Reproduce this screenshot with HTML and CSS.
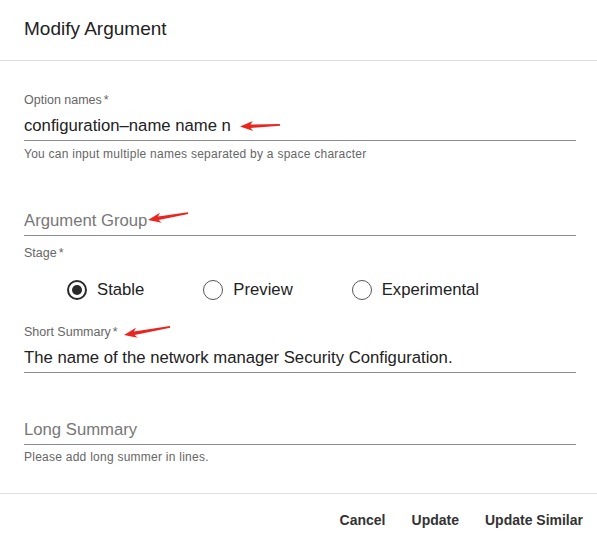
FILE: index.html
```html
<!DOCTYPE html>
<html lang="en">
<head>
<meta charset="utf-8">
<title>Modify Argument</title>
<link rel="stylesheet" href="styles.css">
</head>
<body>
<div class="dialog">
  <header class="dialog-header">
    <h1 class="dialog-title">Modify Argument</h1>
  </header>
  <main class="dialog-body">
    <div class="field">
      <div class="field-label">Option names<span class="req">*</span></div>
      <div class="field-input">configuration–name name n</div>
      <div class="field-help">You can input multiple names separated by a space character</div>
    </div>
    <div class="field field-group">
      <div class="field-input placeholder">Argument Group</div>
    </div>
    <div class="field field-stage">
      <div class="field-label">Stage<span class="req">*</span></div>
      <div class="radio-row">
        <label class="radio"><span class="radio-dot checked"></span><span class="radio-text">Stable</span></label>
        <label class="radio"><span class="radio-dot"></span><span class="radio-text">Preview</span></label>
        <label class="radio"><span class="radio-dot"></span><span class="radio-text">Experimental</span></label>
      </div>
    </div>
    <div class="field field-short">
      <div class="field-label">Short Summary<span class="req">*</span></div>
      <div class="field-input">The name of the network manager Security Configuration.</div>
    </div>
    <div class="field field-long">
      <div class="field-input placeholder">Long Summary</div>
      <div class="field-help help-long">Please add long summer in lines.</div>
    </div>
  </main>
  <footer class="dialog-footer">
    <button class="btn">Cancel</button>
    <button class="btn">Update</button>
    <button class="btn">Update Similar</button>
  </footer>
  <svg class="annotations" width="597" height="546" viewBox="0 0 597 546">
    <g fill="#e8261f">
      <polygon transform="translate(240,126.5) rotate(-2.2)" points="0,0 13,-5 10.5,-1.6 40,-0.9 40,0.9 10.5,1.8 13,5"/>
      <polygon transform="translate(148,220) rotate(-9.9)" points="0,0 13,-5 10.5,-1.6 40.6,-0.9 40.6,0.9 10.5,1.8 13,5"/>
      <polygon transform="translate(124,335) rotate(-9.9)" points="0,0 13,-5 10.5,-1.6 46.7,-0.9 46.7,0.9 10.5,1.8 13,5"/>
    </g>
  </svg>
</div>
</body>
</html>
```
FILE: styles.css
```css
* { box-sizing: border-box; }
html, body { margin: 0; padding: 0; background: #fff; }
body { font-family: "Liberation Sans", Arial, sans-serif; color: #222; }

.dialog {
  position: relative;
  width: 597px;
  height: 546px;
  display: flex;
  flex-direction: column;
  background: #fff;
}

.dialog-header {
  height: 61px;
  padding: 0 24px;
  display: flex;
  align-items: center;
  border-bottom: 1px solid #dedede;
}
.dialog-title {
  margin: 0;
  font-size: 19px;
  font-weight: 400;
  color: #222;
  line-height: 24px;
  margin-top: -2px;
}

.dialog-body {
  flex: 1;
  padding: 31px 21px 0 24px;
}

.field-label {
  font-size: 12.5px;
  line-height: 16px;
  color: #666;
}
.req { margin-left: 2px; }

.field-input {
  height: 33px;
  padding-top: 4px;
  line-height: 28px;
  font-size: 16.7px;
  color: #222;
  border-bottom: 1px solid #8a8a8a;
  white-space: nowrap;
}
.field-input.placeholder { color: #777; }

.field-help {
  margin-top: 6px;
  font-size: 12px;
  letter-spacing: 0.25px;
  line-height: 14px;
  color: #666;
}

.field-group { margin-top: 42px; }
.field-stage { margin-top: 9px; }

.radio-row {
  margin-top: 17px;
  height: 24px;
  padding-left: 43px;
  display: flex;
  align-items: center;
  gap: 59px;
}
.radio {
  display: flex;
  align-items: center;
  gap: 10px;
  font-size: 16.7px;
  color: #222;
}
.radio-dot {
  width: 20px;
  height: 20px;
  border-radius: 50%;
  border: 1.5px solid #555;
  display: flex;
  align-items: center;
  justify-content: center;
}
.radio-dot.checked { border: 2px solid #2a2a2a; }
.radio-dot.checked::after {
  content: "";
  width: 10px;
  height: 10px;
  border-radius: 50%;
  background: #2a2a2a;
}

.field-short { margin-top: 22px; }
.field-long { margin-top: 39px; }
.help-long { margin-top: 5px; }

.dialog-footer {
  height: 53px;
  border-top: 1px solid #dedede;
  display: flex;
  align-items: center;
  justify-content: flex-end;
  gap: 10px;
  padding-right: 6px;
}
.btn {
  font-family: "Liberation Sans", Arial, sans-serif;
  font-size: 14px;
  font-weight: 700;
  color: #333;
  background: none;
  border: 0;
  padding: 4px 8px;
  cursor: pointer;
}

.annotations {
  position: absolute;
  left: 0;
  top: 0;
  pointer-events: none;
}
```
